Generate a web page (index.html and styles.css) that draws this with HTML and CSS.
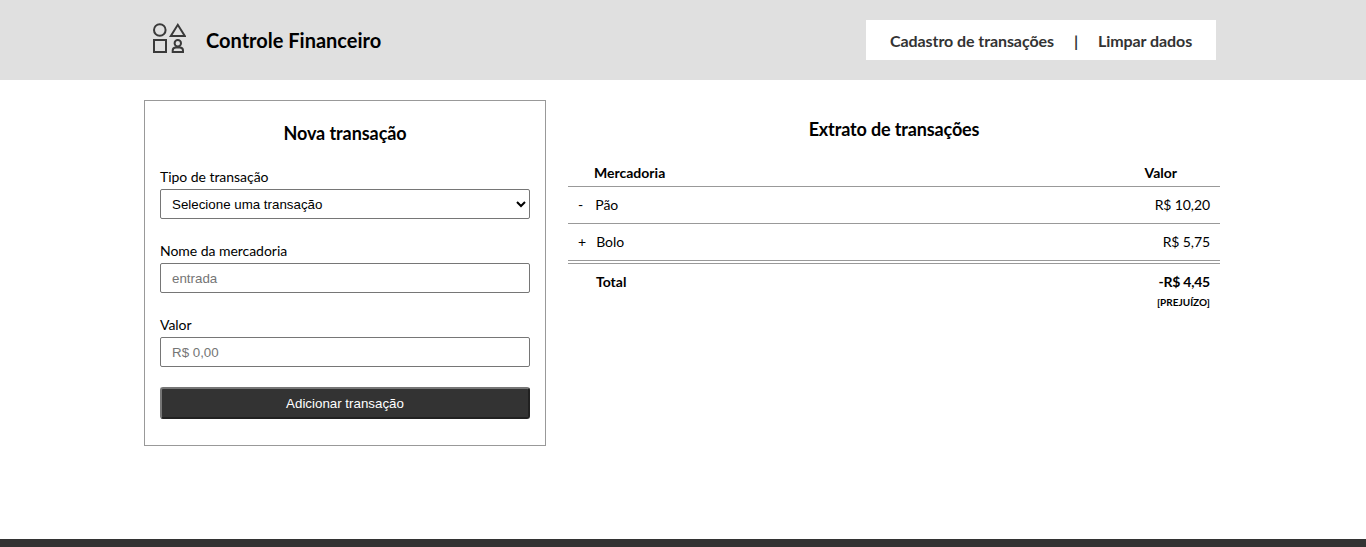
FILE: index.html
```html
<!DOCTYPE html>
<html lang="pt-BR">
<head>
    <meta charset="UTF-8">
    <meta name="viewport" content="width=device-width, initial-scale=1.0">
    <title>Controle Financeiro</title>
    <link rel="stylesheet" href="styles.css">
</head>
<body>
    <header class="header">
        <div class="container header-inner">
            <div class="brand">
                <svg class="logo" width="34" height="32" viewBox="0 0 34 32" fill="none" stroke="#3a3a3a" stroke-width="2">
                    <circle cx="7.8" cy="8" r="5.8"/>
                    <path d="M18.8 14 L25.8 2.8 L32.8 14 Z"/>
                    <rect x="2" y="18" width="12" height="12"/>
                    <circle cx="25.8" cy="21.2" r="3.2"/>
                    <path d="M20.7 30 V28.6 Q20.7 25.6 24 25.6 H27.6 Q31 25.6 31 28.6 V30 Z"/>
                </svg>
                <h1 class="brand-name">Controle Financeiro</h1>
            </div>
            <nav class="menu">
                <a href="#">Cadastro de transações</a>
                <span class="menu-sep">|</span>
                <a href="#">Limpar dados</a>
            </nav>
        </div>
    </header>

    <main class="container content">
        <section class="card">
            <h2 class="card-title">Nova transação</h2>
            <form>
                <div class="field">
                    <label for="tipo">Tipo de transação</label>
                    <select id="tipo">
                        <option>Selecione uma transação</option>
                    </select>
                </div>
                <div class="field">
                    <label for="nome">Nome da mercadoria</label>
                    <input type="text" id="nome" placeholder="entrada">
                </div>
                <div class="field">
                    <label for="valor">Valor</label>
                    <input type="text" id="valor" placeholder="R$ 0,00">
                </div>
                <button type="button" class="submit">Adicionar transação</button>
            </form>
        </section>

        <section class="extrato">
            <h2 class="extrato-title">Extrato de transações</h2>
            <table class="tabela">
                <thead>
                    <tr>
                        <th class="col-nome head-nome">Mercadoria</th>
                        <th class="col-valor head-valor">Valor</th>
                    </tr>
                </thead>
                <tbody>
                    <tr>
                        <td class="col-nome"><span class="sinal sinal-menos">-</span>Pão</td>
                        <td class="col-valor">R$ 10,20</td>
                    </tr>
                    <tr>
                        <td class="col-nome"><span class="sinal sinal-mais">+</span>Bolo</td>
                        <td class="col-valor">R$ 5,75</td>
                    </tr>
                </tbody>
                <tfoot>
                    <tr>
                        <td class="col-nome total">Total</td>
                        <td class="col-valor total"><span class="total-valor">-R$ 4,45</span><small class="status">[PREJUÍZO]</small></td>
                    </tr>
                </tfoot>
            </table>
        </section>
    </main>

    <footer class="footer"></footer>
</body>
</html>
```

FILE: styles.css
```css
* {
    box-sizing: border-box;
}

html, body {
    height: 100%;
}

body {
    margin: 0;
    display: flex;
    flex-direction: column;
    font-family: Lato, sans-serif;
    color: #000;
    background: #fff;
}

.container {
    width: 1078px;
    margin: 0 auto;
}

/* Header */
.header {
    height: 80px;
    background: #e0e0e0;
}

.header-inner {
    height: 100%;
    display: flex;
    align-items: center;
    justify-content: space-between;
    padding: 0 0 0 8px;
}

.brand {
    display: flex;
    align-items: center;
    gap: 20px;
}

.logo {
    display: block;
    margin-top: -4px;
}

.brand-name {
    margin: 0;
    font-size: 20px;
    font-weight: 700;
}

.menu {
    width: 350px;
    height: 40px;
    margin-right: 6px;
    padding-left: 24px;
    display: flex;
    align-items: center;
    gap: 20px;
    background: #fff;
    font-size: 16px;
    font-weight: 700;
    letter-spacing: -0.08px;
    color: #333;
}

.menu a {
    color: #333;
    text-decoration: none;
}

/* Form */
.content {
    flex: 1;
    display: flex;
    align-items: flex-start;
    gap: 22px;
    padding-top: 20px;
}

.card {
    width: 402px;
    height: 346px;
    padding: 0 15px;
    border: 1px solid #999;
}

.card-title {
    margin: 21px 0;
    font-size: 18px;
    line-height: 22px;
    font-weight: 700;
    letter-spacing: -0.07px;
    text-align: center;
}

.field {
    margin-bottom: 20px;
}

.field label {
    display: block;
    height: 24px;
    font-size: 14px;
    line-height: 24px;
    letter-spacing: -0.04px;
}

.field select,
.field input {
    display: block;
    width: 100%;
    height: 30px;
    padding: 0 11px;
    border: 1px solid #767676;
    border-radius: 2px;
    background: #fff;
    font-family: "Liberation Sans", Arial, sans-serif;
    font-size: 13.33px;
    color: #000;
}

.field select {
    padding: 0 7px;
}

.field input::placeholder {
    color: #757575;
}

.submit {
    display: block;
    width: 100%;
    height: 32px;
    border: 2px outset #767676;
    border-radius: 3px;
    background: #333;
    color: #fff;
    font-family: "Liberation Sans", Arial, sans-serif;
    font-size: 13.33px;
}

/* Extrato */
.extrato {
    width: 652px;
}

.extrato-title {
    margin: 0 0 18px;
    padding-top: 18px;
    font-size: 18px;
    line-height: 22px;
    font-weight: 700;
    letter-spacing: -0.14px;
    text-align: center;
}

.tabela {
    width: 100%;
    border-collapse: collapse;
    font-size: 14px;
}

.tabela th {
    height: 28px;
    padding: 2px 0 0;
    font-weight: 700;
    text-align: left;
    border-bottom: 1px solid #999;
}

.tabela tbody td {
    height: 37px;
    padding: 0;
    border-bottom: 1px solid #999;
}

.tabela tbody tr:last-child td {
    height: 39px;
    border-bottom: 4px double #999;
}

.tabela tfoot td {
    padding: 9px 0 0;
    vertical-align: top;
}

.tabela .col-nome {
    padding-left: 10px;
}

.tabela .col-valor {
    text-align: right;
    padding-right: 10px;
    letter-spacing: -0.1px;
}

.tabela .head-nome {
    padding-left: 26px;
}

.tabela .head-valor {
    padding-right: 43px;
    letter-spacing: 0;
}

.sinal-menos {
    margin-right: 12px;
}

.sinal-mais {
    margin-right: 10px;
}

.tabela .total {
    font-weight: 700;
}

.tabela .col-nome.total {
    padding-left: 28px;
}

.total-valor {
    letter-spacing: -0.25px;
}

.status {
    display: block;
    margin-top: 6px;
    font-size: 10px;
    font-weight: 700;
    letter-spacing: 0;
}

.footer {
    height: 8px;
    background: #333;
}
```
